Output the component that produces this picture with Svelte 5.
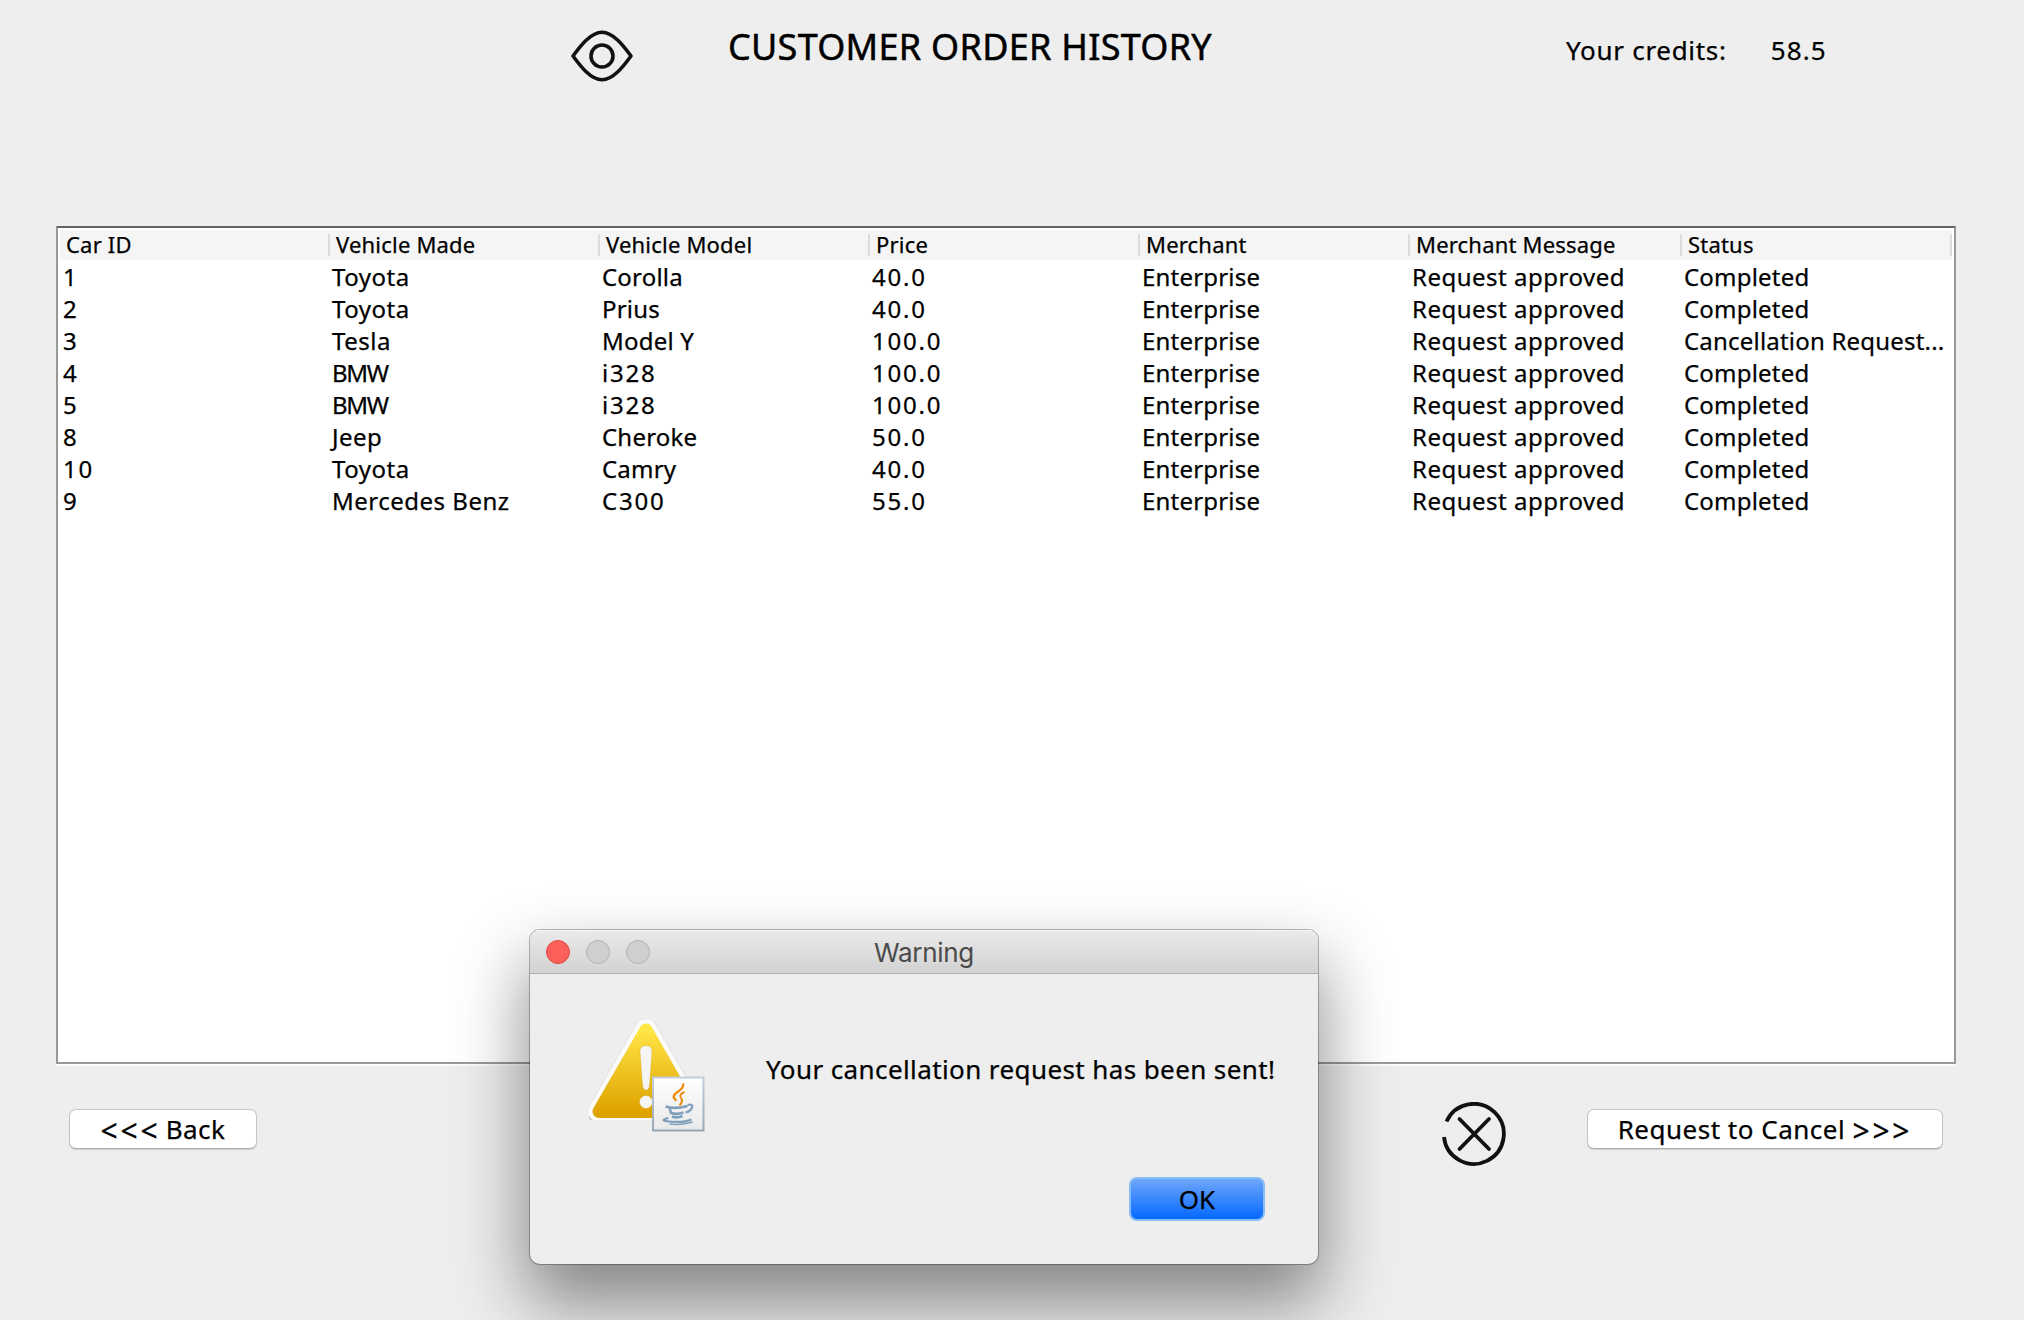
<script>
  const columns = ['Car ID', 'Vehicle Made', 'Vehicle Model', 'Price', 'Merchant', 'Merchant Message', 'Status'];

  const orders = [
    ['1', 'Toyota', 'Corolla', '40.0', 'Enterprise', 'Request approved', 'Completed'],
    ['2', 'Toyota', 'Prius', '40.0', 'Enterprise', 'Request approved', 'Completed'],
    ['3', 'Tesla', 'Model Y', '100.0', 'Enterprise', 'Request approved', 'Cancellation Request...'],
    ['4', 'BMW', 'i328', '100.0', 'Enterprise', 'Request approved', 'Completed'],
    ['5', 'BMW', 'i328', '100.0', 'Enterprise', 'Request approved', 'Completed'],
    ['8', 'Jeep', 'Cheroke', '50.0', 'Enterprise', 'Request approved', 'Completed'],
    ['10', 'Toyota', 'Camry', '40.0', 'Enterprise', 'Request approved', 'Completed'],
    ['9', 'Mercedes Benz', 'C300', '55.0', 'Enterprise', 'Request approved', 'Completed']
  ];

  // Digits are set wide, all-capital words tight.
  function tracking(value) {
    if (/\d/.test(value)) return 'digits';
    if (value === value.toUpperCase()) return 'caps';
    return '';
  }
</script>

<main class="window">
  <header class="top">
    <svg class="eye" viewBox="0 0 64 54" fill="none" stroke="#111" stroke-width="3.6" stroke-linejoin="round">
      <path d="M3 27C9 19 20 3.200 32 3.200S55 19 61 27C55 35 44 50.800 32 50.800S9 35 3 27Z" />
      <circle cx="32" cy="27" r="11" />
    </svg>
    <h1>CUSTOMER ORDER HISTORY</h1>
    <p class="credits"><span>Your credits:</span><span class="amount">58.5</span></p>
  </header>

  <section class="table">
    <div class="row head">
      {#each columns as name}
        <div class="cell">{name}</div>
      {/each}
    </div>
    {#each orders as order}
      <div class="row">
        {#each order as value, i}
          <div class="cell {tracking(value)}" class:narrow={i === 2 || i === 4 || i === 6}>{value}</div>
        {/each}
      </div>
    {/each}
  </section>

  <footer class="actions">
    <button class="back"><span class="arrows">&lt;&lt;&lt;</span> Back</button>
    <svg class="cancel-icon" viewBox="0 0 66 66" fill="none" stroke="#111" stroke-width="3.8" stroke-linecap="round">
      <path d="M5.500 19.500A30 30 0 1 1 3 35" stroke-linecap="butt" />
      <path d="M18.500 17L48 47M48 17L18.500 47" />
    </svg>
    <button class="cancel">Request to Cancel <span class="arrows">&gt;&gt;&gt;</span></button>
  </footer>

  <div class="dialog" role="alertdialog" aria-label="Warning">
    <div class="titlebar">
      <div class="lights">
        <i class="close"></i>
        <i></i>
        <i></i>
      </div>
      <span class="title">Warning</span>
    </div>
    <div class="body">
      <svg class="warn" viewBox="0 0 126 120">
        <defs>
          <linearGradient id="gold" x1="0" y1="0" x2="0" y2="1">
            <stop offset="0" stop-color="#ffe545" />
            <stop offset="1" stop-color="#dfa300" />
          </linearGradient>
          <linearGradient id="paper" x1="0" y1="0" x2="0" y2="1">
            <stop offset="0" stop-color="#fff" />
            <stop offset="1" stop-color="#e9e9e9" />
          </linearGradient>
          <linearGradient id="edge" x1="0" y1="0" x2="0" y2="1">
            <stop offset="0" stop-color="#c2cfda" />
            <stop offset="1" stop-color="#98a7b4" />
          </linearGradient>
          <filter id="soft" x="-10%" y="-10%" width="120%" height="120%">
            <feDropShadow dx="0" dy="1.5" stdDeviation="1.3" flood-opacity="0.4" />
          </filter>
        </defs>
        <g filter="url(#soft)">
          <path d="M60 15L107.500 97.500H12.500Z" fill="#fbfbfb" stroke="#fbfbfb" stroke-width="20.500" stroke-linejoin="round" />
        </g>
        <path d="M60 16L106.500 97.500H13Z" fill="url(#gold)" stroke="url(#gold)" stroke-width="13" stroke-linejoin="round" />
        <g fill="#f5f5f5" stroke="#c99200" stroke-opacity=".35" stroke-width=".8">
          <path d="M54 37.500Q54 31.500 60 31.500T66 37.500L63.500 71Q63 76 60 76T56.500 71Z" />
          <circle cx="60" cy="88" r="6.500" />
        </g>
        <rect x="67" y="63.500" width="50.500" height="53" fill="url(#paper)" stroke="url(#edge)" stroke-width="2" />
        <g transform="translate(-.5 -1.500)">
          <g fill="none" stroke="#ee8b12" stroke-width="2.400">
            <path d="M97.500 71Q99 75 92 79.500T91 88" />
            <path d="M99 79.500Q93 82 95.500 85.500T94 93" stroke-width="2" />
          </g>
          <g fill="none" stroke="#7f9fba" stroke-width="2.600">
            <path d="M80 94Q89 97 102 93.500M84 95L85.500 100.500Q91 102.500 98 100M86.500 104Q91 106 97 103.500" />
            <path d="M102 92.500Q108 91 106.500 95T100 100" stroke-width="2.200" />
            <path d="M83 105.500Q73 108 83 109Q98 110.500 106 107" stroke-width="2.200" />
            <path d="M84 111.500Q96 113 107 109.500" stroke-width="1.400" />
          </g>
        </g>
      </svg>
      <p class="message">Your cancellation request has been sent!</p>
      <button class="ok">OK</button>
    </div>
  </div>
</main>

<style>
  :global(body) {
    background: #eee;
  }

  .window {
    position: relative;
    width: 2024px;
    height: 1320px;
    overflow: hidden;
    box-sizing: border-box;
    background: #eee;
    color: #000;
    font-family: 'Noto Sans', 'Open Sans', sans-serif;
    -webkit-text-stroke: 0.25px #000;
  }

  .top {
    display: flex;
    align-items: flex-start;
    height: 226px;
    padding-left: 570px;
  }

  .eye {
    width: 64px;
    height: 54px;
    margin-top: 29px;
  }

  h1 {
    width: 742px;
    margin: 22px 0 0 94px;
    font-size: 36px;
    font-weight: 400;
    line-height: 50px;
    letter-spacing: 0.27px;
    white-space: nowrap;
    -webkit-text-stroke-width: 0.5px;
  }

  .credits {
    display: flex;
    gap: 44px;
    margin: 32px 0 0 96px;
    font-size: 26px;
    line-height: 36px;
    letter-spacing: 0.7px;
  }

  .amount {
    letter-spacing: 1.1px;
  }

  .table {
    box-sizing: border-box;
    width: 1900px;
    height: 838px;
    margin-left: 56px;
    padding: 2px 2px 0;
    background: #fff;
    border: 2px solid #999;
    border-top-color: #646464;
    box-shadow: 0 2px 0 #fafafa;
  }

  .row {
    display: grid;
    grid-template-columns: 269px repeat(4, 270px) 272px 1fr;
    height: 32px;
    font-size: 24px;
    line-height: 30px;
    letter-spacing: 0.5px;
  }

  .cell {
    padding-left: 3px;
    white-space: nowrap;
  }

  .narrow {
    letter-spacing: 0.2px;
  }

  .digits {
    letter-spacing: 1.8px;
  }

  .caps {
    letter-spacing: -1.3px;
  }

  .head {
    grid-template-columns: repeat(5, 270px) 272px 1fr;
    height: 30px;
    margin-bottom: 2px;
    background: #f5f5f5;
    font-size: 22px;
    letter-spacing: 0.2px;
  }

  .head .cell {
    height: 22px;
    margin-top: 4px;
    padding-left: 6px;
    border-right: 2px solid #dcdcdc;
    line-height: 20px;
  }

  .actions {
    display: flex;
    align-items: flex-start;
    padding: 38px 0 0 69px;
  }

  button {
    box-sizing: border-box;
    height: 40px;
    margin: 7px 0 0;
    padding: 0;
    border: 1px solid #c6c6c6;
    border-bottom-color: #ababab;
    border-radius: 7px;
    background: #fff;
    box-shadow: 0 1px 1px rgba(0, 0, 0, 0.12);
    color: #000;
    font: 26px/36px 'Noto Sans', 'Open Sans', sans-serif;
    letter-spacing: 0.5px;
    white-space: nowrap;
    -webkit-text-stroke: 0.25px #000;
  }

  .arrows {
    font-size: 30px;
    line-height: 0;
    letter-spacing: 2.8px;
    vertical-align: -3px;
  }

  .back {
    width: 188px;
  }

  .back .arrows {
    margin-right: -2px;
  }

  .cancel-icon {
    width: 66px;
    height: 66px;
    margin-left: 1184px;
  }

  .cancel {
    width: 356px;
    margin-left: 80px;
  }

  .dialog {
    position: absolute;
    left: 530px;
    top: 930px;
    width: 788px;
    height: 334px;
    border-radius: 10px;
    background: #eee;
    box-shadow:
      0 0 0 1px rgba(0, 0, 0, 0.27),
      0 36px 70px 4px rgba(0, 0, 0, 0.44);
  }

  .titlebar {
    display: grid;
    grid-template-columns: 1fr auto 1fr;
    align-items: center;
    box-sizing: border-box;
    height: 44px;
    padding: 0 16px;
    border-bottom: 1px solid #adadad;
    border-radius: 10px 10px 0 0;
    background: linear-gradient(#eaeaea, #d2d2d2);
    box-shadow: inset 0 1px 0 #f6f6f6;
  }

  .lights {
    display: flex;
    gap: 16px;
  }

  .lights i {
    box-sizing: border-box;
    width: 24px;
    height: 24px;
    border: 1px solid #b2b2b2;
    border-radius: 50%;
    background: #cfcfcf;
  }

  .lights .close {
    border-color: #e04640;
    background: #fc605b;
  }

  .title {
    padding-top: 2px;
    color: #4a4a4a;
    font: 26px/32px Inter, sans-serif;
    letter-spacing: -0.3px;
    -webkit-text-stroke-width: 0;
  }

  .body {
    display: grid;
    grid-template-columns: 178px 1fr 134px;
    grid-template-rows: 150px 1fr;
    padding: 42px 54px 0 56px;
  }

  .warn {
    width: 126px;
    height: 120px;
    margin-top: -2px;
  }

  .message {
    grid-column: 2 / 4;
    margin: 35px 0 0 2px;
    font-size: 26px;
    line-height: 36px;
    letter-spacing: 0.4px;
    white-space: nowrap;
  }

  .ok {
    grid-column: 3;
    width: 136px;
    height: 44px;
    margin: 11px 0 0 -1px;
    border: 2px solid #86bdf5;
    border-radius: 8px;
    background: linear-gradient(#6ea6fb, #056aff);
    box-shadow: none;
    letter-spacing: 0;
  }
</style>
